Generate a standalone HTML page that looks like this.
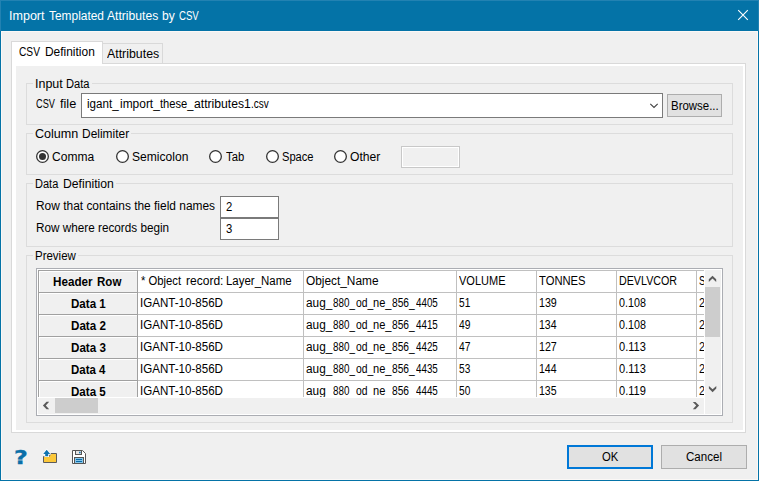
<!DOCTYPE html><html><head><meta charset="utf-8"><title>Import Templated Attributes by CSV</title><style>
html,body{margin:0;padding:0}
body{width:759px;height:481px;overflow:hidden;background:#f0f0f0;position:relative;font-family:"Liberation Sans",sans-serif;font-size:12px;color:#000}
.a{position:absolute;box-sizing:border-box}
.t{position:absolute;white-space:pre;line-height:14px;font-size:12px;transform-origin:0 0}
.b{font-weight:bold}
.gb{position:absolute;box-sizing:border-box;border:1px solid #dcdcdc}
.lbl{position:absolute;background:#f0f0f0;height:3px}
.ed{position:absolute;box-sizing:border-box;border:1px solid #7a7a7a;background:#fff}
.btn{position:absolute;box-sizing:border-box;border:1px solid #adadad;background:#e1e1e1}
.hl{position:absolute;height:1px}
.vl{position:absolute;width:1px}
</style></head><body>
<div class="a" style="left:0;top:0;width:759px;height:481px;border:1px solid #0473a7"></div>
<div class="a" style="left:0;top:0;width:759px;height:31px;background:#0473a7;box-shadow:inset 1px 1px 0 #2282b2,inset -1px 0 0 #2282b2"></div>
<div class="a" style="left:1px;top:31px;width:757px;height:449px;border:1px solid #fbf8f6"></div>
<svg class="a" style="left:736px;top:8px" width="14" height="14" viewBox="0 0 14 14"><path d="M2.2 2.2 L11.8 11.8 M11.8 2.2 L2.2 11.8" stroke="#fff" stroke-width="1.1" fill="none"/></svg>
<div class="a" style="left:11px;top:63px;width:735px;height:370px;border:1px solid #d9d9d9;background:#fff"></div>
<div class="a" style="left:16px;top:66px;width:727px;height:364px;background:#f0f0f0"></div>
<div class="a" style="left:102px;top:43px;width:61px;height:21px;border:1px solid #d9d9d9;border-left:none;background:#f0f0f0"></div>
<div class="a" style="left:11px;top:41px;width:92px;height:23px;border:1px solid #d9d9d9;border-bottom:none;background:#fff"></div>
<div class="gb" style="left:26px;top:83px;width:707px;height:42px"></div>
<div class="lbl" style="left:33px;top:82px;width:59px"></div>
<div class="gb" style="left:26px;top:133px;width:707px;height:42px"></div>
<div class="lbl" style="left:33px;top:132px;width:98px"></div>
<div class="gb" style="left:26px;top:183px;width:707px;height:64px"></div>
<div class="lbl" style="left:33px;top:182px;width:83px"></div>
<div class="gb" style="left:26px;top:255px;width:707px;height:168px"></div>
<div class="lbl" style="left:33px;top:254px;width:45px"></div>
<div class="ed" style="left:81px;top:93px;width:582px;height:25px"></div>
<svg class="a" style="left:648px;top:101px" width="12" height="9" viewBox="0 0 12 9"><path d="M2.3 2.9 L6 6.4 L9.7 2.9" stroke="#404040" stroke-width="1.1" fill="none"/></svg>
<div class="btn" style="left:667px;top:94px;width:55px;height:23px"></div>
<svg class="a" style="left:36px;top:150px" width="13" height="13" viewBox="0 0 13 13"><circle cx="6.5" cy="6.5" r="5.85" fill="#fff" stroke="#333" stroke-width="1.3"/><circle cx="6.5" cy="6.5" r="3.5" fill="#333"/></svg>
<svg class="a" style="left:116px;top:150px" width="13" height="13" viewBox="0 0 13 13"><circle cx="6.5" cy="6.5" r="5.85" fill="#fff" stroke="#333" stroke-width="1.3"/></svg>
<svg class="a" style="left:209px;top:150px" width="13" height="13" viewBox="0 0 13 13"><circle cx="6.5" cy="6.5" r="5.85" fill="#fff" stroke="#333" stroke-width="1.3"/></svg>
<svg class="a" style="left:266px;top:150px" width="13" height="13" viewBox="0 0 13 13"><circle cx="6.5" cy="6.5" r="5.85" fill="#fff" stroke="#333" stroke-width="1.3"/></svg>
<svg class="a" style="left:334px;top:150px" width="13" height="13" viewBox="0 0 13 13"><circle cx="6.5" cy="6.5" r="5.85" fill="#fff" stroke="#333" stroke-width="1.3"/></svg>
<div class="a" style="left:401px;top:146px;width:59px;height:22px;border:1px solid #c8c8c8;background:#f0f0f0;box-shadow:inset 0 0 0 1px #fff"></div>
<div class="ed" style="left:220px;top:196px;width:59px;height:22px"></div>
<div class="ed" style="left:220px;top:218px;width:59px;height:22px"></div>
<div class="a" style="left:36px;top:268px;width:687px;height:148px;border:1px solid #abadb3;background:#fff"></div>
<div class="a" style="left:38px;top:270px;width:100px;height:127px;background:#f0f0f0"></div>
<div class="hl" style="left:39px;top:271px;width:98px;background:#fff"></div>
<div class="hl" style="left:39px;top:293px;width:98px;background:#fff"></div>
<div class="hl" style="left:39px;top:315px;width:98px;background:#fff"></div>
<div class="hl" style="left:39px;top:337px;width:98px;background:#fff"></div>
<div class="hl" style="left:39px;top:359px;width:98px;background:#fff"></div>
<div class="hl" style="left:39px;top:381px;width:98px;background:#fff"></div>
<div class="vl" style="left:39px;top:271px;height:126px;background:#fff"></div>
<div class="hl" style="left:138px;top:270px;width:566px;background:#c0c0c0"></div>
<div class="hl" style="left:38px;top:270px;width:100px;background:#a0a0a0"></div>
<div class="hl" style="left:138px;top:292px;width:566px;background:#c0c0c0"></div>
<div class="hl" style="left:38px;top:292px;width:100px;background:#a0a0a0"></div>
<div class="hl" style="left:138px;top:314px;width:566px;background:#c0c0c0"></div>
<div class="hl" style="left:38px;top:314px;width:100px;background:#a0a0a0"></div>
<div class="hl" style="left:138px;top:336px;width:566px;background:#c0c0c0"></div>
<div class="hl" style="left:38px;top:336px;width:100px;background:#a0a0a0"></div>
<div class="hl" style="left:138px;top:358px;width:566px;background:#c0c0c0"></div>
<div class="hl" style="left:38px;top:358px;width:100px;background:#a0a0a0"></div>
<div class="hl" style="left:138px;top:380px;width:566px;background:#c0c0c0"></div>
<div class="hl" style="left:38px;top:380px;width:100px;background:#a0a0a0"></div>
<div class="vl" style="left:303px;top:270px;height:127px;background:#c0c0c0"></div>
<div class="vl" style="left:456px;top:270px;height:127px;background:#c0c0c0"></div>
<div class="vl" style="left:536px;top:270px;height:127px;background:#c0c0c0"></div>
<div class="vl" style="left:616px;top:270px;height:127px;background:#c0c0c0"></div>
<div class="vl" style="left:696px;top:270px;height:127px;background:#c0c0c0"></div>
<div class="vl" style="left:38px;top:270px;height:127px;background:#a0a0a0"></div>
<div class="vl" style="left:137px;top:270px;height:127px;background:#a0a0a0"></div>
<div class="btn" style="left:567px;top:445px;width:86px;height:24px;border:2px solid #0078d7;z-index:0"></div>
<div class="btn" style="left:661px;top:445px;width:86px;height:24px"></div>
<span id="t0" class="t" style="left:9.24px;top:9px;color:#fff;transform:scaleX(1.0448)">Import </span>
<span id="t1" class="t" style="left:49.34px;top:9px;color:#fff;transform:scaleX(0.9932)">Templated </span>
<span id="t2" class="t" style="left:106.74px;top:9px;color:#fff;transform:scaleX(1.0108)">Attributes </span>
<span id="t3" class="t" style="left:162.22px;top:9px;color:#fff;transform:scaleX(1.0046)">by </span>
<span id="t4" class="t" style="left:178.81px;top:9px;color:#fff;transform:scaleX(0.8001)">CSV</span>
<span id="t5" class="t" style="left:19.00px;top:45px;color:#000;transform:scaleX(0.8486)">CSV </span>
<span id="t6" class="t" style="left:45.09px;top:45px;color:#000;transform:scaleX(0.9950)">Definition</span>
<span id="t7" class="t" style="left:106.74px;top:47px;color:#000;transform:scaleX(1.0293)">Attributes</span>
<span id="t8" class="t" style="left:34.64px;top:77px;color:#000;transform:scaleX(1.0396)">Input </span>
<span id="t9" class="t" style="left:66.13px;top:77px;color:#000;transform:scaleX(0.9280)">Data</span>
<span id="t10" class="t" style="left:36.40px;top:97px;color:#000;transform:scaleX(0.7665)">CSV </span>
<span id="t11" class="t" style="left:60.35px;top:97px;color:#000;transform:scaleX(1.0618)">file</span>
<span id="t12" class="t" style="left:87.23px;top:97px;color:#000;transform:scaleX(0.9667)">igant_</span>
<span id="t13" class="t" style="left:120.12px;top:97px;color:#000;transform:scaleX(0.9955)">import_</span>
<span id="t14" class="t" style="left:160.24px;top:97px;color:#000;transform:scaleX(0.9293)">these_</span>
<span id="t15" class="t" style="left:193.86px;top:97px;color:#000;transform:scaleX(1.0134)">attributes1</span>
<span id="t16" class="t" style="left:251.04px;top:97px;color:#000;transform:scaleX(0.8319)">.csv</span>
<span id="t17" class="t" style="left:670.68px;top:99px;color:#000;transform:scaleX(0.9541)">Browse...</span>
<span id="t18" class="t" style="left:34.62px;top:127px;color:#000;transform:scaleX(1.0480)">Column </span>
<span id="t19" class="t" style="left:82.21px;top:127px;color:#000;transform:scaleX(0.9954)">Delimiter</span>
<span id="t20" class="t" style="left:52.47px;top:150px;color:#000;transform:scaleX(1.0026)">Comma</span>
<span id="t21" class="t" style="left:131.70px;top:150px;color:#000;transform:scaleX(1.0072)">Semicolon</span>
<span id="t22" class="t" style="left:225.76px;top:150px;color:#000;transform:scaleX(0.9394)">Tab</span>
<span id="t23" class="t" style="left:281.80px;top:150px;color:#000;transform:scaleX(0.9274)">Space</span>
<span id="t24" class="t" style="left:349.55px;top:150px;color:#000;transform:scaleX(1.0110)">Other</span>
<span id="t25" class="t" style="left:35.19px;top:177px;color:#000;transform:scaleX(0.9195)">Data </span>
<span id="t26" class="t" style="left:62.96px;top:177px;color:#000;transform:scaleX(1.0164)">Definition</span>
<span id="t27" class="t" style="left:35.79px;top:199px;color:#000;transform:scaleX(0.9943)">Row that contains the field names</span>
<span id="t28" class="t" style="left:35.82px;top:221px;color:#000;transform:scaleX(0.9784)">Row where records begin</span>
<span id="t29" class="t" style="left:226.03px;top:200px;color:#000;transform:scaleX(0.9400)">2</span>
<span id="t30" class="t" style="left:225.82px;top:222px;color:#000;transform:scaleX(0.9400)">3</span>
<span id="t31" class="t" style="left:35.08px;top:249px;color:#000;transform:scaleX(0.9569)">Preview</span>
<span id="t32" class="t b" style="left:52.63px;top:275px;color:#000;transform:scaleX(0.9711)">Header </span>
<span id="t33" class="t b" style="left:97.26px;top:275px;color:#000;transform:scaleX(0.9616)">Row</span>
<span id="t34" class="t b" style="left:70.63px;top:297px;color:#000;transform:scaleX(0.9648)">Data 1</span>
<span id="t35" class="t b" style="left:70.63px;top:319px;color:#000;transform:scaleX(0.9692)">Data 2</span>
<span id="t36" class="t b" style="left:70.63px;top:341px;color:#000;transform:scaleX(0.9692)">Data 3</span>
<span id="t37" class="t b" style="left:70.63px;top:363px;color:#000;transform:scaleX(0.9563)">Data 4</span>
<span id="t38" class="t b" style="left:70.63px;top:385px;color:#000;transform:scaleX(0.9649)">Data 5</span>
<span id="t39" class="t" style="left:141.03px;top:274px;color:#000;transform:scaleX(0.9381)">* Object </span>
<span id="t40" class="t" style="left:185.58px;top:274px;color:#000;transform:scaleX(1.0024)">record: </span>
<span id="t41" class="t" style="left:225.68px;top:274px;color:#000;transform:scaleX(0.9538)">Layer_Name</span>
<span id="t42" class="t" style="left:305.66px;top:274px;color:#000;transform:scaleX(0.9879)">Object_Name</span>
<span id="t43" class="t" style="left:459.33px;top:274px;color:#000;transform:scaleX(0.9177)">VOLUME</span>
<span id="t44" class="t" style="left:539.26px;top:274px;color:#000;transform:scaleX(0.9353)">TONNES</span>
<span id="t45" class="t" style="left:618.55px;top:274px;color:#000;transform:scaleX(0.8918)">DEVLVCOR</span>
<span id="t46" class="t" style="left:140.04px;top:296px;color:#000;transform:scaleX(0.9639)">IGANT-10-856D</span>
<span id="t47" class="t" style="left:306.32px;top:296px;color:#000;transform:scaleX(0.9855)">aug_</span>
<span id="t48" class="t" style="left:332.97px;top:296px;color:#000;transform:scaleX(0.8204)">880_</span>
<span id="t49" class="t" style="left:356.07px;top:296px;color:#000;transform:scaleX(0.8644)">od_</span>
<span id="t50" class="t" style="left:373.47px;top:296px;color:#000;transform:scaleX(0.9249)">ne_</span>
<span id="t51" class="t" style="left:392.07px;top:296px;color:#000;transform:scaleX(0.8507)">856_</span>
<span id="t52" class="t" style="left:415.80px;top:296px;color:#000;transform:scaleX(0.8173)">4405</span>
<span id="t53" class="t" style="left:458.52px;top:296px;color:#000;transform:scaleX(0.8441)">51</span>
<span id="t54" class="t" style="left:538.99px;top:296px;color:#000;transform:scaleX(0.8894)">139</span>
<span id="t55" class="t" style="left:619.23px;top:296px;color:#000;transform:scaleX(0.8942)">0.108</span>
<span id="t56" class="t" style="left:140.04px;top:318px;color:#000;transform:scaleX(0.9639)">IGANT-10-856D</span>
<span id="t57" class="t" style="left:306.32px;top:318px;color:#000;transform:scaleX(0.9855)">aug_</span>
<span id="t58" class="t" style="left:332.97px;top:318px;color:#000;transform:scaleX(0.8204)">880_</span>
<span id="t59" class="t" style="left:356.07px;top:318px;color:#000;transform:scaleX(0.8644)">od_</span>
<span id="t60" class="t" style="left:373.47px;top:318px;color:#000;transform:scaleX(0.9249)">ne_</span>
<span id="t61" class="t" style="left:392.07px;top:318px;color:#000;transform:scaleX(0.8507)">856_</span>
<span id="t62" class="t" style="left:415.80px;top:318px;color:#000;transform:scaleX(0.8173)">4415</span>
<span id="t63" class="t" style="left:459.33px;top:318px;color:#000;transform:scaleX(0.8569)">49</span>
<span id="t64" class="t" style="left:538.52px;top:318px;color:#000;transform:scaleX(0.8786)">134</span>
<span id="t65" class="t" style="left:619.23px;top:318px;color:#000;transform:scaleX(0.8942)">0.108</span>
<span id="t66" class="t" style="left:140.04px;top:340px;color:#000;transform:scaleX(0.9639)">IGANT-10-856D</span>
<span id="t67" class="t" style="left:306.32px;top:340px;color:#000;transform:scaleX(0.9855)">aug_</span>
<span id="t68" class="t" style="left:332.97px;top:340px;color:#000;transform:scaleX(0.8204)">880_</span>
<span id="t69" class="t" style="left:356.07px;top:340px;color:#000;transform:scaleX(0.8644)">od_</span>
<span id="t70" class="t" style="left:373.47px;top:340px;color:#000;transform:scaleX(0.9249)">ne_</span>
<span id="t71" class="t" style="left:392.07px;top:340px;color:#000;transform:scaleX(0.8507)">856_</span>
<span id="t72" class="t" style="left:415.80px;top:340px;color:#000;transform:scaleX(0.8173)">4425</span>
<span id="t73" class="t" style="left:459.33px;top:340px;color:#000;transform:scaleX(0.8569)">47</span>
<span id="t74" class="t" style="left:538.99px;top:340px;color:#000;transform:scaleX(0.8894)">127</span>
<span id="t75" class="t" style="left:619.23px;top:340px;color:#000;transform:scaleX(0.9218)">0.113</span>
<span id="t76" class="t" style="left:140.04px;top:362px;color:#000;transform:scaleX(0.9639)">IGANT-10-856D</span>
<span id="t77" class="t" style="left:306.32px;top:362px;color:#000;transform:scaleX(0.9855)">aug_</span>
<span id="t78" class="t" style="left:332.97px;top:362px;color:#000;transform:scaleX(0.8204)">880_</span>
<span id="t79" class="t" style="left:356.07px;top:362px;color:#000;transform:scaleX(0.8644)">od_</span>
<span id="t80" class="t" style="left:373.47px;top:362px;color:#000;transform:scaleX(0.9249)">ne_</span>
<span id="t81" class="t" style="left:392.07px;top:362px;color:#000;transform:scaleX(0.8507)">856_</span>
<span id="t82" class="t" style="left:415.80px;top:362px;color:#000;transform:scaleX(0.8173)">4435</span>
<span id="t83" class="t" style="left:458.52px;top:362px;color:#000;transform:scaleX(0.8441)">53</span>
<span id="t84" class="t" style="left:538.52px;top:362px;color:#000;transform:scaleX(0.8786)">144</span>
<span id="t85" class="t" style="left:619.23px;top:362px;color:#000;transform:scaleX(0.9218)">0.113</span>
<span id="t86" class="t" style="left:140.04px;top:384px;color:#000;transform:scaleX(0.9639)">IGANT-10-856D</span>
<span id="t87" class="t" style="left:306.32px;top:384px;color:#000;transform:scaleX(0.9855)">aug_</span>
<span id="t88" class="t" style="left:332.97px;top:384px;color:#000;transform:scaleX(0.8204)">880_</span>
<span id="t89" class="t" style="left:356.07px;top:384px;color:#000;transform:scaleX(0.8644)">od_</span>
<span id="t90" class="t" style="left:373.47px;top:384px;color:#000;transform:scaleX(0.9249)">ne_</span>
<span id="t91" class="t" style="left:392.07px;top:384px;color:#000;transform:scaleX(0.8507)">856_</span>
<span id="t92" class="t" style="left:415.80px;top:384px;color:#000;transform:scaleX(0.8173)">4445</span>
<span id="t93" class="t" style="left:459.02px;top:384px;color:#000;transform:scaleX(0.8467)">50</span>
<span id="t94" class="t" style="left:538.99px;top:384px;color:#000;transform:scaleX(0.8802)">135</span>
<span id="t95" class="t" style="left:619.23px;top:384px;color:#000;transform:scaleX(0.9205)">0.119</span>
<span id="t96" class="t" style="left:602.34px;top:450px;color:#000;transform:scaleX(0.9400)">OK</span>
<span id="t97" class="t" style="left:686.34px;top:450px;color:#000;transform:scaleX(0.9628)">Cancel</span>
<div class="a" style="left:697px;top:271px;width:7px;height:126px;overflow:hidden">
<span class="t" style="left:1.6px;top:3px;transform:scaleX(.8)">STATUS</span>
<span class="t" style="left:1.7px;top:25px;transform:scaleX(.9)">2019</span>
<span class="t" style="left:1.7px;top:47px;transform:scaleX(.9)">2019</span>
<span class="t" style="left:1.7px;top:69px;transform:scaleX(.9)">2019</span>
<span class="t" style="left:1.7px;top:91px;transform:scaleX(.9)">2019</span>
<span class="t" style="left:1.7px;top:113px;transform:scaleX(.9)">2019</span>
</div>
<div class="a" style="left:704px;top:270px;width:1px;height:144px;background:#fff"></div>
<div class="a" style="left:38px;top:397px;width:667px;height:1px;background:#fff"></div>
<div class="a" style="left:705px;top:270px;width:16px;height:144px;background:#f0f0f0"></div>
<div class="a" style="left:38px;top:398px;width:666px;height:16px;background:#f0f0f0"></div>
<div class="a" style="left:705px;top:287px;width:15px;height:50px;background:#cdcdcd"></div>
<div class="a" style="left:55px;top:398px;width:43px;height:15px;background:#cdcdcd"></div>
<svg class="a" style="left:0;top:0" width="759" height="481" viewBox="0 0 759 481"><polygon points="708.80,282.00 708.80,279.30 712.50,275.70 716.20,279.30 716.20,282.00 712.50,278.60" fill="#5a5a5a"/><polygon points="708.90,385.90 708.90,388.60 712.60,392.20 716.30,388.60 716.30,385.90 712.60,389.30" fill="#5a5a5a"/><polygon points="49.20,401.80 46.50,401.80 42.90,405.50 46.50,409.20 49.20,409.20 45.80,405.50" fill="#5a5a5a"/><polygon points="692.80,401.90 695.50,401.90 699.10,405.60 695.50,409.30 692.80,409.30 696.20,405.60" fill="#5a5a5a"/></svg>
<span id="q" class="t b" style="left:14.0px;top:446px;font-family:'DejaVu Sans',sans-serif;font-size:19.5px;line-height:24px;color:#0a6fa8;-webkit-text-stroke:0.35px #0a6fa8;transform:scaleX(1.22)">?</span>
<svg class="a" style="left:40px;top:447px" width="20" height="20" viewBox="0 0 20 20">
<path d="M3.5 9.5 H9.2 L10.7 6.5 H16.5 V15.5 H3.5 Z" fill="#fcc83a" stroke="#5c5c5c" stroke-width="1"/>
<path d="M6.7 1.6 L11.4 7.6 H9 V10 H4.4 V7.6 H2 Z" fill="#fff"/>
<path d="M6.7 2.7 L10.2 7 H8.2 V9.3 H5.2 V7 H3.2 Z" fill="#0f73b0"/>
</svg>
<svg class="a" style="left:70px;top:447px" width="20" height="20" viewBox="0 0 20 20">
<path d="M2.5 3.5 H12.5 L15.5 6.5 V16.5 H2.5 Z" fill="#fff" stroke="#555" stroke-width="1"/>
<rect x="5.5" y="3.5" width="6" height="4" fill="#e4e4e4" stroke="#555" stroke-width="1"/>
<rect x="9" y="4.7" width="1.6" height="1.6" fill="#1273b0"/>
<rect x="4.5" y="10.5" width="9" height="6" fill="#86c6ea" stroke="#555" stroke-width="1"/>
<rect x="6" y="12" width="6" height="1" fill="#0a6aa8"/>
<rect x="6" y="14" width="6" height="1" fill="#0a6aa8"/>
</svg>
</body></html>
